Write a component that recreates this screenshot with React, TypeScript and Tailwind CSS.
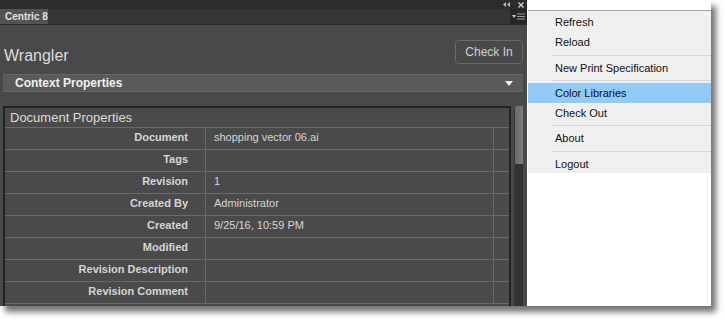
const rows: { label: string; value: string }[] = [
  { label: "Document", value: "shopping vector 06.ai" },
  { label: "Tags", value: "" },
  { label: "Revision", value: "1" },
  { label: "Created By", value: "Administrator" },
  { label: "Created", value: "9/25/16, 10:59 PM" },
  { label: "Modified", value: "" },
  { label: "Revision Description", value: "" },
  { label: "Revision Comment", value: "" },
]

// menu groups, separated by a rule
const menu: { label: string; active?: boolean }[][] = [
  [{ label: "Refresh" }, { label: "Reload" }],
  [{ label: "New Print Specification" }],
  [{ label: "Color Libraries", active: true }, { label: "Check Out" }],
  [{ label: "About" }],
  [{ label: "Logout" }],
]

export default function App() {
  return (
    <div className="w-[725px] h-[322px] bg-white overflow-hidden font-['Liberation_Sans',Arial,sans-serif]">
      <div className="w-[711px] h-[306px] flex shadow-[5px_6px_6px_rgba(0,0,0,0.55)]">
        {/* Dark panel */}
        <div className="w-[527px] flex flex-col bg-[#494949]">
          {/* Title strip */}
          <div className="h-[9px] bg-[#2c2c2c] flex items-center justify-end gap-[8px] pr-[3px] text-[#bdbdbd]">
            <svg width="7" height="5" viewBox="0 0 7 5">
              <path d="M3 0 L0 2.5 L3 5Z M7 0 L4 2.5 L7 5Z" fill="#bdbdbd" />
            </svg>
            <svg width="6" height="6" viewBox="0 0 6 6">
              <path d="M0.5 0.5 L5.5 5.5 M5.5 0.5 L0.5 5.5" stroke="#cfcfcf" strokeWidth="1.4" />
            </svg>
          </div>
          {/* Tab strip */}
          <div className="h-[16px] bg-[#353535] flex border-b border-[#2a2a2a]">
            <div className="w-[48px] bg-[#535353] text-[#e2e2e2] text-[10px] font-bold pl-[5px] leading-[15px]">
              Centric 8
            </div>
            <div className="flex-1" />
            <div className="w-[17px] bg-[#262626] flex items-center justify-center gap-[1px]">
              <svg width="4" height="3" viewBox="0 0 4 3">
                <path d="M0 0 L4 0 L2 3Z" fill="#cfcfcf" />
              </svg>
              <svg width="8" height="7" viewBox="0 0 8 7">
                <path d="M0 1 H8 M0 3.5 H8 M0 6 H8" stroke="#9a9a9a" strokeWidth="1" />
              </svg>
            </div>
          </div>
          {/* Content */}
          <div className="flex-1 flex flex-col pl-[3px] pr-[4px]">
            <div className="flex items-start justify-between pt-[15px] pl-[1px]">
              <span className="text-[16px] leading-[20px] mt-[6px] text-[#dcdcdc]">Wrangler</span>
              <button className="w-[68px] h-[24px] rounded-[4px] border border-[#6a6a6a] text-[12px] text-[#d0d0d0]">
                Check In
              </button>
            </div>
            <div className="h-[18px] bg-[#5a5a5a] border-y border-[#666] flex items-center justify-between pl-[12px] pr-[10px] mt-[8px]">
              <span className="text-[12px] font-bold text-[#f0f0f0]">Context Properties</span>
              <svg width="8" height="5" viewBox="0 0 8 5">
                <path d="M0 0 L8 0 L4 5Z" fill="#f0f0f0" />
              </svg>
            </div>
            <div className="flex-1 flex mt-[14px] gap-[3px] overflow-hidden">
              {/* Table */}
              <div className="w-[510px] border-2 border-b-0 border-[#232323] bg-[#4a4a4a]">
                <div className="h-[20px] border-b border-[#6a6a6a] text-[13px] text-[#dcdcdc] pl-[5px] leading-[19px]">
                  Document Properties
                </div>
                {rows.map((r) => (
                  <div key={r.label} className="h-[22px] flex border-b border-[#6a6a6a] text-[11px] text-[#d6d6d6]">
                    <div className="w-[201px] border-r border-[#6a6a6a] text-right pr-[17px] font-bold leading-[19px]">
                      {r.label}
                    </div>
                    <div className="w-[288px] border-r border-[#6a6a6a] pl-[8px] leading-[19px]">{r.value}</div>
                    <div className="flex-1" />
                  </div>
                ))}
              </div>
              {/* Scrollbar */}
              <div className="flex-1 flex flex-col bg-[#3a3a3a] pl-[1px]">
                <div className="h-[58px] w-[8px] bg-gradient-to-r from-[#6a6a6a] to-[#7c7c7c]" />
                <div className="flex-1 bg-[#323232]" />
              </div>
            </div>
          </div>
        </div>
        {/* White side with the open menu */}
        <div className="flex-1 bg-white pt-[10px] pl-[1px]">
          <div className="h-[163px] bg-[#f0f0f0] border-t border-[#a5a5a5] pt-[1px] text-[11px] text-[#111]">
            {menu.map((group, gi) => (
              <div key={gi}>
                {gi > 0 && (
                  <div
                    className={`h-[1px] bg-[#d7d7d7] ml-[24px] ${gi === 1 || gi === 4 ? "mt-[3px] mb-[2px]" : "mt-[2px] mb-[2px]"}`}
                  />
                )}
                {group.map((item) => (
                  <div
                    key={item.label}
                    className={`h-[20px] leading-[20px] pl-[27px] ${item.active ? "bg-[#91c9f7]" : ""}`}
                  >
                    {item.label}
                  </div>
                ))}
              </div>
            ))}
          </div>
        </div>
      </div>
    </div>
  )
}
